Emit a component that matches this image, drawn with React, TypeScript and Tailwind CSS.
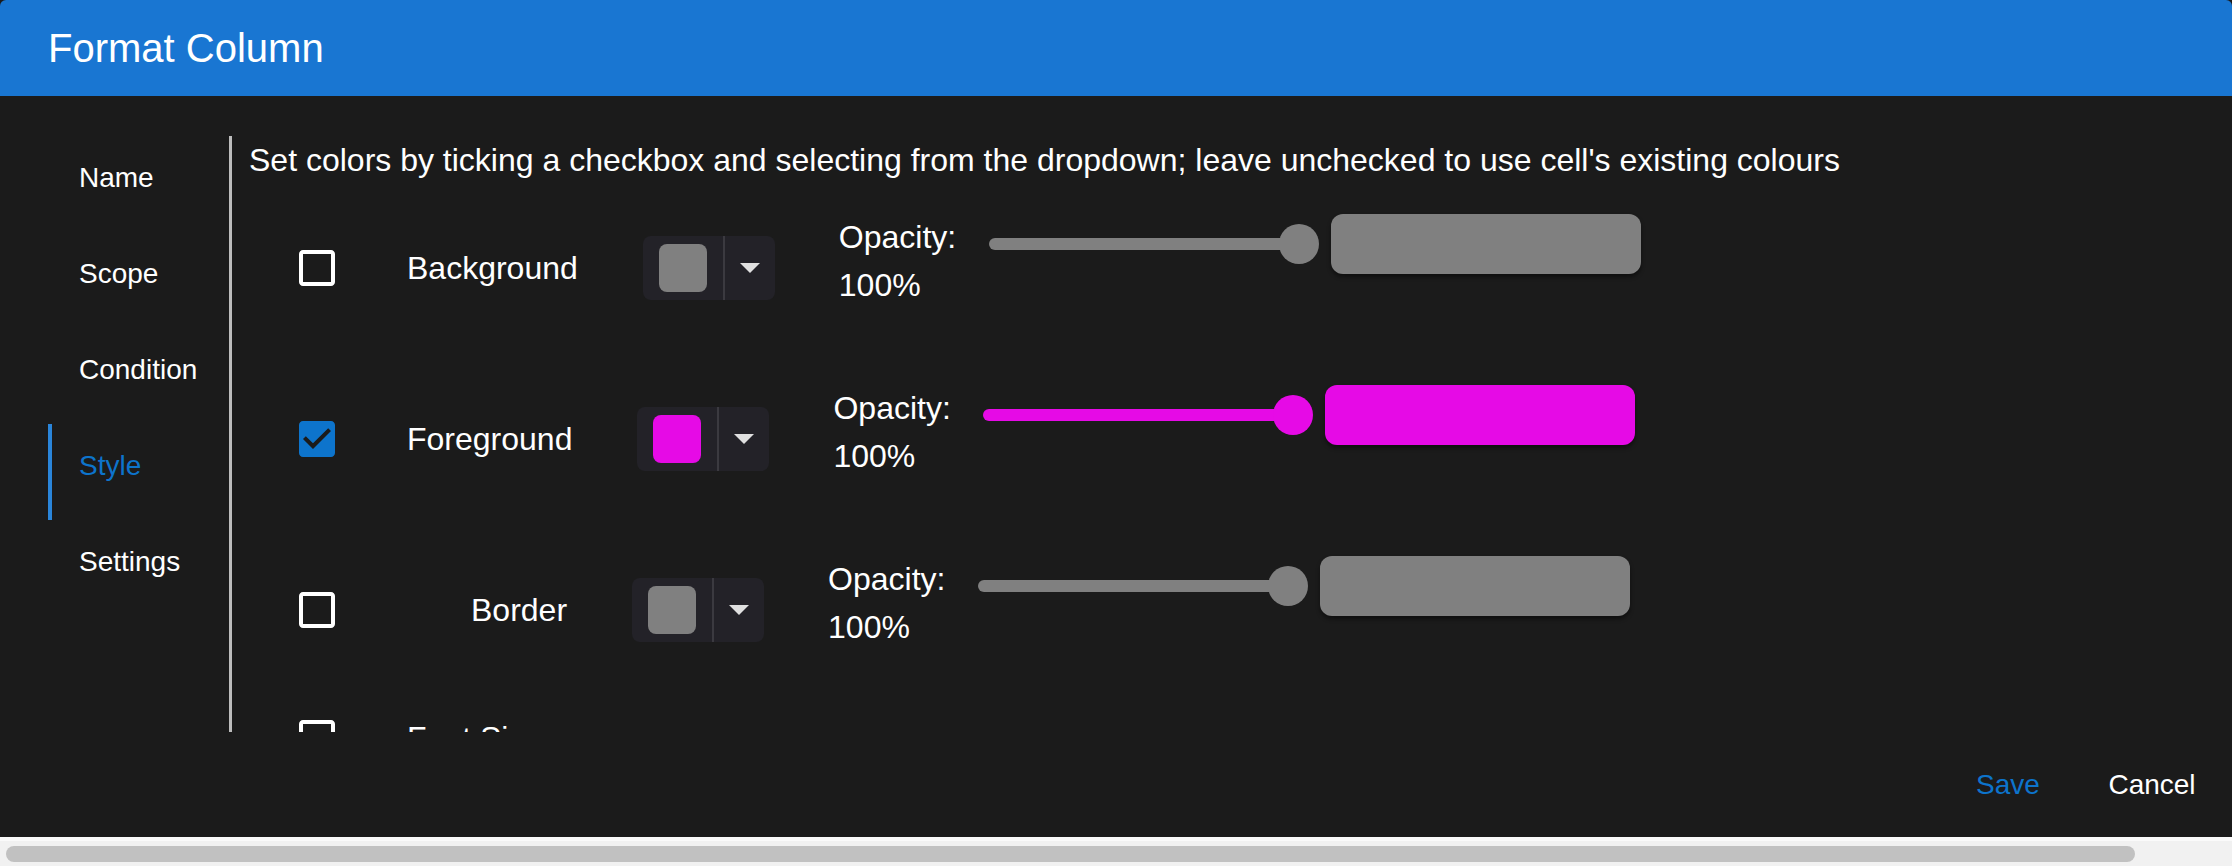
import React from "react"

// Colour rows shown in the Style tab
const COLOR_ROWS = [
  {
    key: "background",
    label: "Background",
    checked: false,
    labelClass: "ml-[66px]",
    swatch: "bg-[#808080]",
  },
  {
    key: "foreground",
    label: "Foreground",
    checked: true,
    labelClass: "ml-[66px]",
    swatch: "bg-[#e60ae6]",
  },
  {
    key: "border",
    label: "Border",
    checked: false,
    labelClass: "ml-[130px]",
    swatch: "bg-[#808080]",
  },
]

const TABS = ["Name", "Scope", "Condition", "Style", "Settings"]

function CheckIcon({ checked }: { checked: boolean }) {
  if (checked) {
    return (
      <svg viewBox="0 0 24 24" className="w-[48px] h-[48px] shrink-0" fill="#0d74cc">
        <path d="M19 3H5c-1.11 0-2 .9-2 2v14c0 1.1.89 2 2 2h14c1.11 0 2-.9 2-2V5c0-1.1-.89-2-2-2zm-9 14l-5-5 1.41-1.41L10 14.17l7.59-7.59L19 8l-9 9z" />
      </svg>
    )
  }
  return (
    <svg viewBox="0 0 24 24" className="w-[48px] h-[48px] shrink-0" fill="#ffffff">
      <path d="M19 5v14H5V5h14m0-2H5c-1.1 0-2 .9-2 2v14c0 1.1.9 2 2 2h14c1.1 0 2-.9 2-2V5c0-1.1-.9-2-2-2z" />
    </svg>
  )
}

function ColorRow({ row }: { row: (typeof COLOR_ROWS)[number] }) {
  return (
    <div className="flex items-center h-[171px] shrink-0">
      <div className="ml-[44px]">
        <CheckIcon checked={row.checked} />
      </div>
      <div className={`${row.labelClass} text-[32px] leading-[48px] text-white whitespace-nowrap`}>
        {row.label}
      </div>

      {/* colour picker dropdown */}
      <div className="ml-[65px] flex h-[64px] w-[132px] shrink-0 rounded-[8px] bg-[#232228]">
        <div className="flex items-center px-[16px]">
          <div className={`w-[48px] h-[48px] rounded-[8px] ${row.swatch}`} />
        </div>
        <div className="w-[2px] bg-[#3b3a40]" />
        <div className="flex-1 flex items-center justify-center">
          <svg viewBox="0 0 20 10" className="w-[20px] h-[10px]" fill="#e0e0e0">
            <path d="M0 0h20L10 10z" />
          </svg>
        </div>
      </div>

      {/* opacity */}
      <div className="ml-[64px] flex items-start h-[108px] -mt-[2px]">
        <div className="w-[150px] text-[32px] leading-[48px] text-white">Opacity: 100%</div>
        <div className="flex items-center h-[62px]">
          <div className="relative w-[310px] h-[40px] flex items-center">
            <div className={`h-[12px] w-full rounded-full ${row.swatch}`} />
            <div
              className={`absolute right-[-20px] top-0 w-[40px] h-[40px] rounded-full ${row.swatch}`}
            />
          </div>
          <div
            className={`ml-[32px] w-[310px] h-[60px] rounded-[12px] ${row.swatch} shadow-[0_3px_4px_rgba(0,0,0,0.45)]`}
          />
        </div>
      </div>
    </div>
  )
}

export default function App() {
  return (
    <div
      className="w-[2232px] h-[866px] flex flex-col bg-[#1b1b1b] overflow-hidden"
      style={{ fontFamily: '"Liberation Sans", Arial, Helvetica, sans-serif' }}
    >
      {/* Title bar */}
      <div className="h-[96px] shrink-0 flex items-center px-[48px] bg-[#1976d2] rounded-tl-[6px] rounded-tr-[6px]">
        <h2 className="text-[40px] text-white font-normal">Format Column</h2>
      </div>

      {/* Content */}
      <div className="h-[636px] shrink-0 pt-[40px] px-[48px]">
        <div className="flex h-[596px] overflow-hidden">
          {/* Vertical tabs */}
          <div className="w-[184px] shrink-0 border-r-[3px] border-[#bdbdbd] flex flex-col">
            {TABS.map((t) => (
              <div key={t} className="relative h-[96px] shrink-0 flex items-center pl-[31px] pb-[12px]">
                {t === "Style" && <div className="absolute left-0 top-0 w-[4px] h-full bg-[#2a85da]" />}
                <span
                  className={`text-[28px] ${t === "Style" ? "text-[#0d74cc]" : "text-white"}`}
                >
                  {t}
                </span>
              </div>
            ))}
          </div>

          {/* Style panel */}
          <div className="flex-1 pl-[17px] flex flex-col">
            <p className="text-[32px] leading-[48px] text-white whitespace-nowrap">
              Set colors by ticking a checkbox and selecting from the dropdown; leave unchecked to use
              cell's existing colours
            </p>
            <div className="-mt-[2px] flex flex-col">
              {COLOR_ROWS.map((row) => (
                <ColorRow key={row.key} row={row} />
              ))}
              <div className="flex items-center h-[86px] shrink-0">
                <div className="ml-[44px]">
                  <CheckIcon checked={false} />
                </div>
                <div className="ml-[66px] text-[32px] leading-[48px] text-white whitespace-nowrap">
                  Font Size
                </div>
              </div>
            </div>
          </div>
        </div>
      </div>

      {/* Actions */}
      <div className="h-[105px] shrink-0 flex items-center justify-end pr-[16px] gap-[16px]">
        <button className="w-[128px] h-[73px] flex items-center justify-center text-[28px] text-[#0d74cc]">
          Save
        </button>
        <button className="w-[128px] h-[73px] flex items-center justify-center text-[28px] text-white">
          Cancel
        </button>
      </div>

      {/* Horizontal scrollbar */}
      <div className="h-[29px] shrink-0 bg-[#f1f1f1] border-t-[4px] border-[#fafafa] pt-[5px]">
        <div className="ml-[6px] w-[2129px] h-[16px] rounded-full bg-[#c1c1c1]" />
      </div>
    </div>
  )
}
